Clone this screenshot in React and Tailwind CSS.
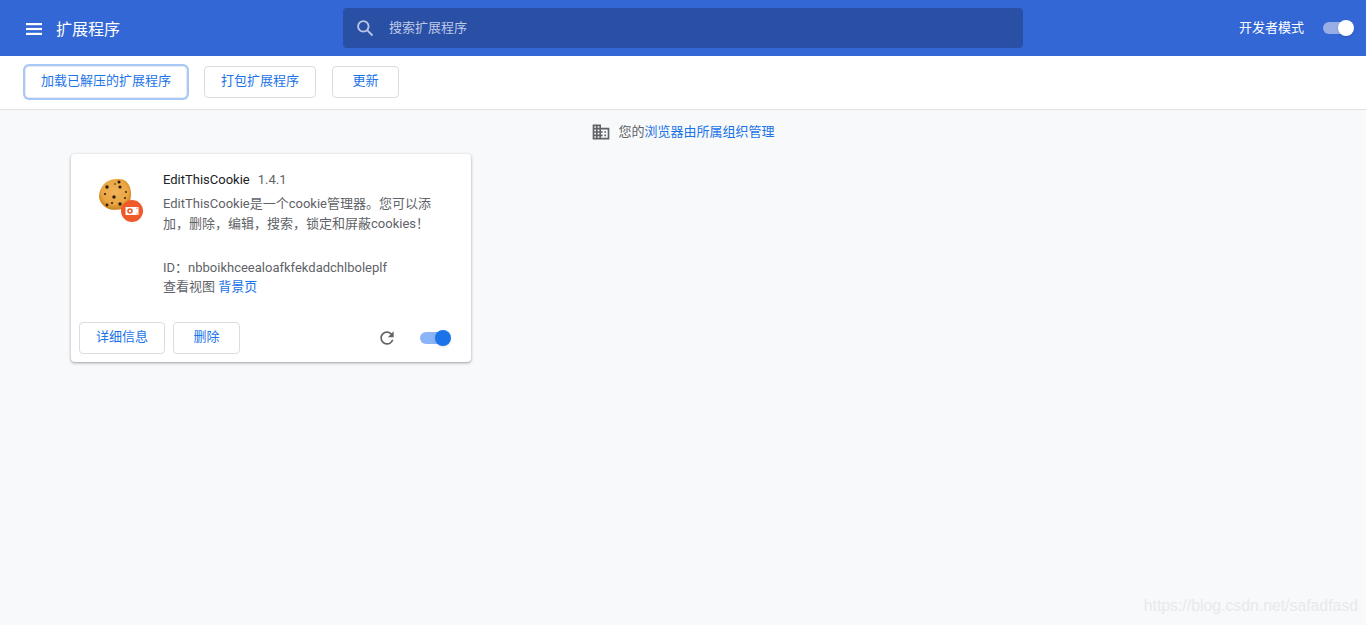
import React from "react";

function Btn({ children, className = "" }) {
  return (
    <button className={"flex items-center justify-center bg-white rounded border pb-[2px] text-[13px] text-[#1a73e8] " + className}>
      {children}
    </button>
  );
}

function Cookie() {
  const dots = [[9,10,1.7],[21,5,1.5],[22,10,1.6],[16,20,1.7],[7,17,1.1],[9,28,1.4],[22,27,1.7],[27,21,1],[28,15,.9],[14,26,1],[17,7,.8]];
  return (
    <svg width="48" height="48" viewBox="0 0 48 48" className="block">
      <defs>
        <radialGradient id="ck" cx="50%" cy="42%" r="58%">
          <stop offset="0%" stopColor="#f0b45c" />
          <stop offset="70%" stopColor="#e9a541" />
          <stop offset="100%" stopColor="#c9801f" />
        </radialGradient>
      </defs>
      <path d="M6 7C10 3 15 2 20 2c6-.5 10 3 12 8 1.500 5 1.500 10 0 14-1.500 5-6 8-11 8.500-5 .5-10 .5-13-2-4-2.500-7-7-7-11 0-5 2-9 5-12.500z" fill="url(#ck)" />
      {dots.map(([x, y, r], i) => (
        <circle key={i} cx={x} cy={y} r={r} fill="#2f1c0d" />
      ))}
      <circle cx="34" cy="34" r="11" fill="#f05a28" />
      <path d="M27.500 30h13v8h-13z" fill="#fff" />
      <circle cx="32" cy="34" r="2.800" fill="#f05a28" />
      <circle cx="32" cy="34" r="1.200" fill="#fff" />
      <circle cx="39" cy="31.200" r=".6" fill="#f05a28" />
      <circle cx="39" cy="36.800" r=".6" fill="#f05a28" />
    </svg>
  );
}

export default function App() {
  return (
    <div className="relative h-screen overflow-hidden bg-[#f8f9fa] font-['Roboto','Noto_Sans_CJK_SC',sans-serif] text-[13px] text-[#5f6368]">
      <header className="h-14 bg-[#3367d6] flex items-center text-white">
        <div className="flex items-center w-[343px] pl-[26px]">
          <svg width="16" height="12" viewBox="0 0 16 12" fill="#fff" className="mt-[1px]">
            <rect y="0" width="16" height="2.200" />
            <rect y="4.900" width="16" height="2.200" />
            <rect y="9.800" width="16" height="2.200" />
          </svg>
          <span className="ml-[14px] text-base mt-[3px]">扩展程序</span>
        </div>
        <div className="w-[680px] h-10 rounded-sm bg-[#2a50a6] flex items-center pl-[12px] text-[#bdc8e6]">
          <svg width="20" height="20" viewBox="0 0 24 24" fill="none" stroke="#bdc8e6" strokeWidth="2.200">
            <circle cx="10" cy="10" r="6.300" />
            <path d="M14.800 14.800L21 21" />
          </svg>
          <span className="ml-[14px]">搜索扩展程序</span>
        </div>
        <div className="flex-1 flex items-center justify-end pr-[13px]">
          <span>开发者模式</span>
          <div className="relative ml-[19px] w-[30px] h-3 rounded-full bg-[#99aee6]">
            <div className="absolute -right-[1px] -top-[2px] w-4 h-4 rounded-full bg-white shadow" />
          </div>
        </div>
      </header>

      <div className="h-[54px] bg-white border-b border-[#dfe1e5] flex items-center pl-6 pb-[1px]">
        <Btn className="w-[162px] h-[32px] mx-[1px] border-[#e8eaed] shadow-[0_0_0_2px_#a8c8f8]">加载已解压的扩展程序</Btn>
        <Btn className="w-[112px] h-[32px] ml-4 border-[#dadce0]">打包扩展程序</Btn>
        <Btn className="w-[67px] h-[32px] ml-4 border-[#dadce0]">更新</Btn>
      </div>

      <div className="h-[44px] flex items-center justify-center pb-[1px]">
        <svg width="20" height="20" viewBox="0 0 24 24" fill="#5f6368" className="mr-[7px]">
          <path d="M12 7V3H2v18h20V7H12zM6 19H4v-2h2v2zm0-4H4v-2h2v2zm0-4H4V9h2v2zm0-4H4V5h2v2zm4 12H8v-2h2v2zm0-4H8v-2h2v2zm0-4H8V9h2v2zm0-4H8V5h2v2zm10 12h-8v-2h2v-2h-2v-2h2v-2h-2V9h8v10zm-2-8h-2v2h2v-2zm0 4h-2v2h2v-2z" />
        </svg>
        <span>您的</span>
        <span className="text-[#1a73e8]">浏览器由所属组织管理</span>
      </div>

      <div className="ml-[71px] w-[400px] h-[208px] bg-white rounded shadow-[0_1px_2px_rgba(60,64,67,.3),0_1px_3px_1px_rgba(60,64,67,.15)] flex flex-col">
        <div className="flex h-[168px]">
          <div className="w-[92px] shrink-0 pl-[27px] pt-[23px]">
            <Cookie />
          </div>
          <div className="flex-1 pt-[18px] pr-[32px] leading-[20px]">
            <div className="flex items-center h-[16px]">
              <span className="text-[#202124]">EditThisCookie</span>
              <span className="ml-2">1.4.1</span>
            </div>
            <p className="mt-[6px]">EditThisCookie是一个cookie管理器。您可以添加，删除，编辑，搜索，锁定和屏蔽cookies！</p>
            <div className="mt-6">ID：nbboikhceealoafkfekdadchlboleplf</div>
            <div className="-mt-[1px]">查看视图 <span className="text-[#1a73e8]">背景页</span></div>
          </div>
        </div>
        <div className="flex items-center pl-2 pr-[21px] pb-[8px] flex-1">
          <Btn className="w-[86px] h-[32px] border-[#dadce0]">详细信息</Btn>
          <Btn className="w-[67px] h-[32px] ml-2 border-[#dadce0]">删除</Btn>
          <svg width="20" height="20" viewBox="0 0 24 24" fill="#5f6368" className="ml-auto mr-[23px]">
            <path d="M17.650 6.350A7.958 7.958 0 0 0 12 4c-4.420 0-7.990 3.580-7.990 8s3.570 8 7.990 8c3.730 0 6.840-2.550 7.730-6h-2.080A5.990 5.990 0 0 1 12 18c-3.310 0-6-2.690-6-6s2.690-6 6-6c1.660 0 3.140.690 4.220 1.780L13 11h7V4l-2.350 2.350z" />
          </svg>
          <div className="relative w-[30px] h-3 rounded-full bg-[#8ab4f8]">
            <div className="absolute -right-[1px] -top-[2px] w-4 h-4 rounded-full bg-[#1a73e8] shadow" />
          </div>
        </div>
      </div>

      <div className="absolute right-2 bottom-[9px] text-[15.8px] leading-[20px] font-['Liberation_Sans',sans-serif] text-[#e8e9eb]">https://blog.csdn.net/safadfasd</div>
    </div>
  );
}
